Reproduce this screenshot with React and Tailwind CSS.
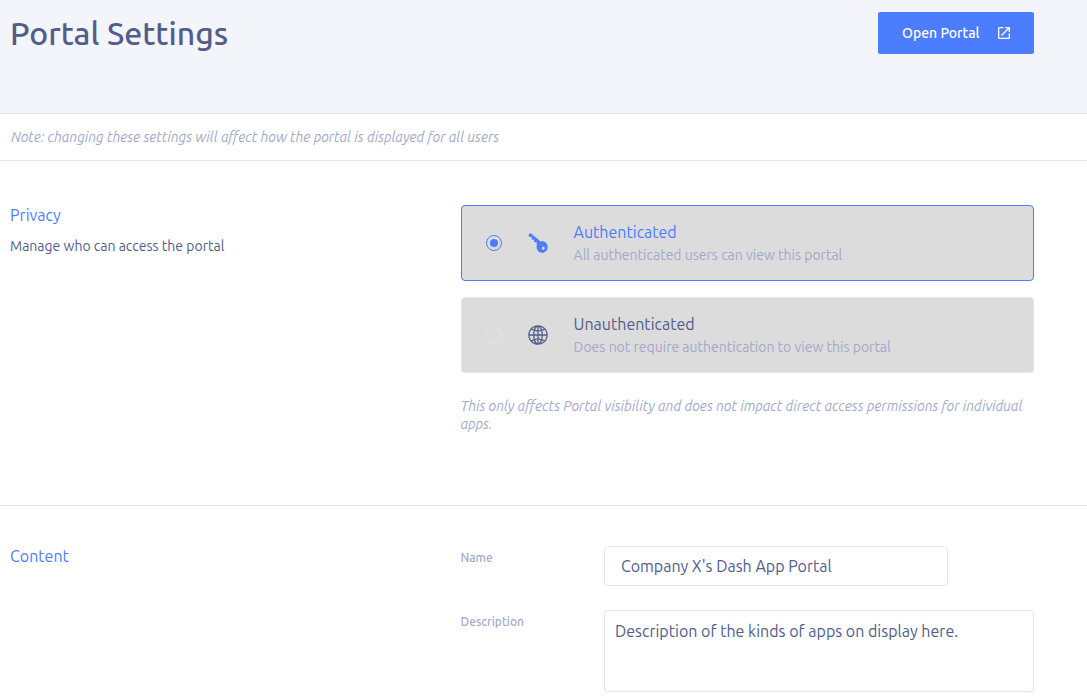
import { useState } from "react";
import { IoIosGlobe, IoIosKey, IoMdOpen } from "react-icons/io";

const privacyOptions = [
  {
    id: "authenticated",
    title: "Authenticated",
    detail: "All authenticated users can view this portal",
    Icon: IoIosKey,
  },
  {
    id: "unauthenticated",
    title: "Unauthenticated",
    detail: "Does not require authentication to view this portal",
    Icon: IoIosGlobe,
  },
];

function PrivacyOption({ option, checked, onSelect }) {
  const { id, title, detail, Icon } = option;
  return (
    <label
      className={`flex items-center rounded border bg-[#dcdcdc] px-6 py-[14px] ${
        checked ? "border-[#4c7dff]" : "border-[#dfe5f3]"
      }`}
    >
      <input
        type="radio"
        name="privacy"
        value={id}
        checked={checked}
        onChange={() => onSelect(id)}
        className="size-4 shrink-0 appearance-none rounded-full border border-[#dfe5f3] bg-clip-content p-[3px] checked:border-[#4c7dff] checked:bg-[#4c7dff]"
      />
      <Icon
        size={24}
        aria-hidden="true"
        className={`ml-6 shrink-0 ${checked ? "text-[#4c7dff]" : "text-[#525d89]"}`}
      />
      <span className="ml-6 flex flex-col">
        <span
          className={`text-[16px] leading-6 ${checked ? "text-[#4c7dff]" : "text-[#525d89]"}`}
        >
          {title}
        </span>
        <span className="text-[14px] leading-[22px] text-[#a2a9c9]">{detail}</span>
      </span>
    </label>
  );
}

export default function App() {
  const [privacy, setPrivacy] = useState("authenticated");

  return (
    <main className="bg-white font-['Ubuntu','Noto_Sans',sans-serif] text-[#525d89]">
      <header className="flex items-start justify-between border-b border-[#dfe5f3] bg-[#f4f5fb] pt-3 pr-[53px] pb-[59px] pl-[10px]">
        <h1 className="text-[32px] leading-[42px] font-medium">Portal Settings</h1>
        <button
          type="button"
          className="flex h-[42px] min-w-[156px] items-center justify-between gap-[10px] rounded-xs bg-[#4c7dff] pr-[22px] pl-6 text-[14px] font-medium text-white"
        >
          Open Portal
          <IoMdOpen size={16} aria-hidden="true" />
        </button>
      </header>

      <p className="border-b border-[#dfe5f3] px-[11px] py-[13px] text-[14px] leading-5 text-[#a2a9c9] italic">
        Note: changing these settings will affect how the portal is displayed for all users
      </p>

      <section className="grid grid-cols-[44%_56%] border-b border-[#dfe5f3] pt-11 pr-[53px] pb-[72px] pl-[10px]">
        <div>
          <h2 className="text-[16px] leading-5 text-[#4c7dff]">Privacy</h2>
          <p className="mt-[11px] text-[14px] leading-5">Manage who can access the portal</p>
        </div>
        <div className="flex flex-col gap-4">
          {privacyOptions.map((option) => (
            <PrivacyOption
              key={option.id}
              option={option}
              checked={privacy === option.id}
              onSelect={setPrivacy}
            />
          ))}
          <p className="pt-2 text-[14px] leading-[18px] text-[#a2a9c9] italic">
            This only affects Portal visibility and does not impact direct access permissions for
            individual apps.
          </p>
        </div>
      </section>

      <section className="grid grid-cols-[44%_56%] pt-10 pr-[53px] pl-[10px]">
        <h2 className="text-[16px] leading-5 text-[#4c7dff]">Content</h2>
        <div className="flex flex-col gap-6">
          <div className="grid grid-cols-[25%_75%] items-start">
            <label
              htmlFor="portal-name"
              className="pt-1 text-[12px] leading-4 font-medium text-[#a2a9c9]"
            >
              Name
            </label>
            <input
              id="portal-name"
              type="text"
              defaultValue="Company X's Dash App Portal"
              className="h-10 w-4/5 rounded border border-[#dfe5f3] bg-white px-4 text-[16px]"
            />
          </div>
          <div className="grid grid-cols-[25%_75%] items-start">
            <label
              htmlFor="portal-description"
              className="pt-1 text-[12px] leading-4 font-medium text-[#a2a9c9]"
            >
              Description
            </label>
            <textarea
              id="portal-description"
              defaultValue="Description of the kinds of apps on display here."
              className="block h-[82px] w-full resize-none rounded-[3px] border border-[#dfe5f3] bg-white p-[10px] text-[16px] leading-5"
            />
          </div>
        </div>
      </section>
    </main>
  );
}
